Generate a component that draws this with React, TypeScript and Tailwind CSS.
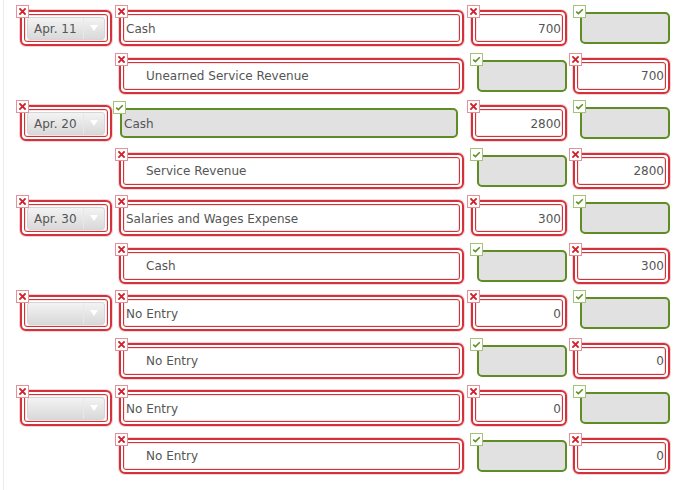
import React from "react";

type Cell =
  | { kind: "red"; text?: string; indent?: boolean; align?: "left" | "right" }
  | { kind: "green"; text?: string };

type Row = {
  date: string | null;
  account: Cell;
  debit: Cell;
  credit: Cell;
};

const FONT = { fontFamily: '"DejaVu Sans", Verdana, sans-serif' };

function XBadge() {
  return (
    <div className="absolute -left-[4px] -top-[5px] z-10 flex h-[13px] w-[13px] items-center justify-center border border-[#e2939a] bg-white">
      <svg width="7" height="7" viewBox="0 0 7 7">
        <path d="M1 1 L6 6 M6 1 L1 6" stroke="#d0232c" strokeWidth="1.8" strokeLinecap="square" />
      </svg>
    </div>
  );
}

function CheckBadge() {
  return (
    <div className="absolute -left-[7px] -top-[7px] z-10 flex h-[13px] w-[13px] items-center justify-center border border-[#a4c27a] bg-white">
      <svg width="9" height="7" viewBox="0 0 9 7">
        <path d="M1.2 3.6 L3.4 5.6 L7.8 1.2" stroke="#5f8f26" strokeWidth="1.5" fill="none" />
      </svg>
    </div>
  );
}

function RedBox({ children }: { children?: React.ReactNode }) {
  return (
    <div className="relative h-full w-full">
      <XBadge />
      <div className="h-full w-full rounded-[6px] border-2 border-[#d3323a] bg-white p-[2px] shadow-[0_0_0_1px_#f7d3d5]">
        <div className="h-full w-full rounded-[3px] border border-[#d3323a] bg-white shadow-[inset_0_0_0_1px_#fbe3e4]">
          {children}
        </div>
      </div>
    </div>
  );
}

function GreenBox({ children }: { children?: React.ReactNode }) {
  return (
    <div className="relative h-full w-full">
      <CheckBadge />
      <div className="h-full w-full rounded-[5px] border-2 border-[#5e8d24] bg-[#e1e1e1]">{children}</div>
    </div>
  );
}

function SelectBox({ value }: { value: string }) {
  return (
    <div className="flex h-full w-full items-center px-[2px] py-[2px]">
      <div className="flex h-[23px] w-[79px] items-stretch overflow-hidden rounded-[3px] border border-[#d6d6d6] bg-gradient-to-b from-[#f3f3f3] to-[#d9d9d9]">
        <div className="flex flex-1 items-center pl-[6px] pt-[1px] text-[12px] text-[#555]" style={FONT}>
          {value}
        </div>
        <div className="flex w-[21px] items-center justify-center border-l border-[#e8e8e8]">
          <svg width="8" height="6" viewBox="0 0 8 6">
            <path d="M0 0 L8 0 L4 6 Z" fill="#ffffff" />
          </svg>
        </div>
      </div>
    </div>
  );
}

function AccountCell({ cell }: { cell: Cell }) {
  if (cell.kind === "green") {
    return (
      <div className="h-full w-full pb-[3px] pl-[1px] pr-[6px] pt-[3px]">
        <GreenBox>
          <div className="flex h-full items-center pl-[2px] pt-[1px] text-[12px] text-[#555]" style={FONT}>
            {cell.text}
          </div>
        </GreenBox>
      </div>
    );
  }
  return (
    <RedBox>
      <div
        className={
          "flex h-full items-center pt-[1px] text-[12px] text-[#555] " + (cell.indent ? "pl-[22px]" : "pl-[2px]")
        }
        style={FONT}
      >
        {cell.text}
      </div>
    </RedBox>
  );
}

function AmountCell({ cell, credit }: { cell: Cell; credit?: boolean }) {
  if (cell.kind === "green") {
    return (
      <div className={"h-full w-full py-[2px] " + (credit ? "pl-[7px]" : "pl-[6px]")}>
        <GreenBox />
      </div>
    );
  }
  return (
    <RedBox>
      <div className="flex h-full items-center justify-end pr-[1px] pt-[1px] text-[12px] text-[#555]" style={FONT}>
        {cell.text}
      </div>
    </RedBox>
  );
}

const rows: Row[] = [];
const entries: { date: string; a: [Cell, Cell, Cell]; b: [Cell, Cell, Cell] }[] = [
  {
    date: "Apr. 11",
    a: [{ kind: "red", text: "Cash" }, { kind: "red", text: "700" }, { kind: "green" }],
    b: [{ kind: "red", text: "Unearned Service Revenue", indent: true }, { kind: "green" }, { kind: "red", text: "700" }],
  },
  {
    date: "Apr. 20",
    a: [{ kind: "green", text: "Cash" }, { kind: "red", text: "2800" }, { kind: "green" }],
    b: [{ kind: "red", text: "Service Revenue", indent: true }, { kind: "green" }, { kind: "red", text: "2800" }],
  },
  {
    date: "Apr. 30",
    a: [{ kind: "red", text: "Salaries and Wages Expense" }, { kind: "red", text: "300" }, { kind: "green" }],
    b: [{ kind: "red", text: "Cash", indent: true }, { kind: "green" }, { kind: "red", text: "300" }],
  },
  {
    date: "",
    a: [{ kind: "red", text: "No Entry" }, { kind: "red", text: "0" }, { kind: "green" }],
    b: [{ kind: "red", text: "No Entry", indent: true }, { kind: "green" }, { kind: "red", text: "0" }],
  },
  {
    date: "",
    a: [{ kind: "red", text: "No Entry" }, { kind: "red", text: "0" }, { kind: "green" }],
    b: [{ kind: "red", text: "No Entry", indent: true }, { kind: "green" }, { kind: "red", text: "0" }],
  },
];
for (const e of entries) {
  rows.push({ date: e.date, account: e.a[0], debit: e.a[1], credit: e.a[2] });
  rows.push({ date: null, account: e.b[0], debit: e.b[1], credit: e.b[2] });
}

export default function App() {
  return (
    <div className="h-[490px] w-[700px] overflow-hidden bg-white">
      <div className="ml-[3px] h-full border-l border-[#ececec] pl-[16px] pt-[10px]">
        <div className="flex flex-col gap-[11.5px]">
          {rows.map((r, i) => (
            <div key={i} className="flex h-[36px] items-stretch">
              <div className="w-[92px]">
                {r.date !== null && (
                  <RedBox>
                    <SelectBox value={r.date} />
                  </RedBox>
                )}
              </div>
              <div className="ml-[7px] w-[345px]">
                <AccountCell cell={r.account} />
              </div>
              <div className="ml-[7px] w-[96px]">
                <AmountCell cell={r.debit} />
              </div>
              <div className="ml-[6px] w-[97px]">
                <AmountCell cell={r.credit} credit />
              </div>
            </div>
          ))}
        </div>
      </div>
    </div>
  );
}
